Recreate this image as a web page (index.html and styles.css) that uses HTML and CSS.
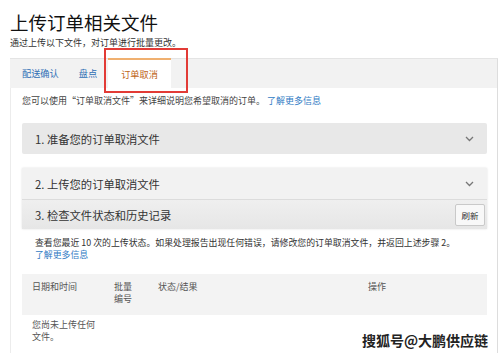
FILE: index.html
```html
<!doctype html>
<html>
<head>
<meta charset="utf-8">
<title>上传订单相关文件</title>
<link rel="stylesheet" href="styles.css">
</head>
<body>
<div class="page">
	<h1 class="title">上传订单相关文件</h1>
	<p class="sub">通过上传以下文件，对订单进行批量更改。</p>

	<div class="tabs">
		<span class="tab first">配送确认</span>
		<span class="tab">盘点</span>
		<span class="tab active">订单取消</span>
		<span class="mark"></span>
	</div>

	<div class="panel">
		<p class="intro">您可以使用“订单取消文件”来详细说明您希望取消的订单。 <a href="#">了解更多信息</a></p>

		<div class="acc acc1">
			<span>1. 准备您的订单取消文件</span>
			<svg class="chev" width="9" height="6" viewBox="0 0 9 6"><path d="M1 1 L4.5 4.5 L8 1" fill="none" stroke="#777" stroke-width="1.3"/></svg>
		</div>

		<div class="group">
			<div class="acc acc2">
				<span>2. 上传您的订单取消文件</span>
				<svg class="chev" width="9" height="6" viewBox="0 0 9 6"><path d="M1 1 L4.5 4.5 L8 1" fill="none" stroke="#777" stroke-width="1.3"/></svg>
			</div>
			<div class="acc acc3">
				<span>3. 检查文件状态和历史记录</span>
				<button class="btn">刷新</button>
			</div>
		</div>

		<p class="status">查看您最近 10 次的上传状态。如果处理报告出现任何错误，请修改您的订单取消文件，并返回上述步骤 2。<br><a href="#">了解更多信息</a></p>

		<table class="list">
			<colgroup><col class="c1"><col class="c2"><col class="c3"><col></colgroup>
			<tr class="head">
				<th>日期和时间</th>
				<th>批量编号</th>
				<th>状态/结果</th>
				<th>操作</th>
			</tr>
			<tr>
				<td>您尚未上传任何文件。</td>
				<td></td>
				<td></td>
				<td></td>
			</tr>
		</table>

		<span class="water">搜狐号@大鹏供应链</span>
	</div>
</div>
</body>
</html>
```
FILE: styles.css
```css
body{ margin:0; background:#fff; font-family:"Noto Sans CJK SC", "Liberation Sans", sans-serif; color:#333;}
a{ color:#2f7bc4; text-decoration:none;}
.page{ padding:10px 1px 0 10px; height:343px; overflow:hidden;}
.title{ margin:0; font-size:18.5px; line-height:24px; font-weight:normal; color:#111;}
.sub{ margin:3px 0 0; font-size:9px; line-height:12px; color:#333;}

.tabs{ margin-top:9px; height:29px; background:#f2f2f2; border-top:1px solid #e4e4e4; border-right:1px solid #ddd; display:flex; align-items:stretch; position:relative;}
.tab{ padding:0 10px; font-size:9.2px; line-height:29px; color:#2f6fb5;}
.tab.first{ margin-left:2px;}
.tab.active{ margin-left:1px; padding:0 13px; background:#fff; color:#c0661a; border-top:2px solid #f0b070; margin-top:-1px; line-height:28px;}
.tabs .mark{ position:absolute; left:94px; top:-11px; width:80px; height:41px; border:2px solid #e23b36;}

.panel{ position:relative; border-left:1px solid #ececec; border-right:1px solid #ddd; padding:7px 10px 0 11px; height:260px;}
.intro{ margin:0; font-size:9px; line-height:12px; color:#444;}

.acc{ display:flex; align-items:center; justify-content:space-between; padding:0 13px; font-size:11.3px; color:#333;}
.acc1{ margin-top:16px; height:31px; background:#e8e8e8; border-radius:2px;}
.group{ margin-top:14px; box-shadow:0 0 2px rgba(0,0,0,0.12);}
.acc2{ height:31px; background:#f2f2f2; border-bottom:1px solid #dcdcdc;}
.acc3{ height:29px; background:linear-gradient(#efefef, #e6e6e6); padding-right:2px;}
.btn{ width:30px; height:22px; padding:0; font-family:inherit; font-size:8.5px; color:#333; background:#f8f8f8; border:1px solid #c9c9c9; border-radius:2px;}

.status{ margin:8px 0 0; padding-left:13px; font-size:8.9px; line-height:12px; color:#333;}

.list{ margin-top:13px; width:100%; border-collapse:collapse; table-layout:fixed; font-size:9px; line-height:12px; color:#555;}
.list .c1{ width:82px;}
.list .c2{ width:44px;}
.list .c3{ width:210px;}
.list th{ text-align:left; font-weight:normal; vertical-align:top; padding:7px 8px 10px 10px; background:#f3f3f3;}
.list td{ vertical-align:top; padding:4px 6px 10px 10px; border-bottom:1px solid #eee;}

.water{ position:absolute; right:9px; top:242px; font-size:14px; font-weight:bold; color:#222; text-shadow:0 0 2px #fff;}
```
